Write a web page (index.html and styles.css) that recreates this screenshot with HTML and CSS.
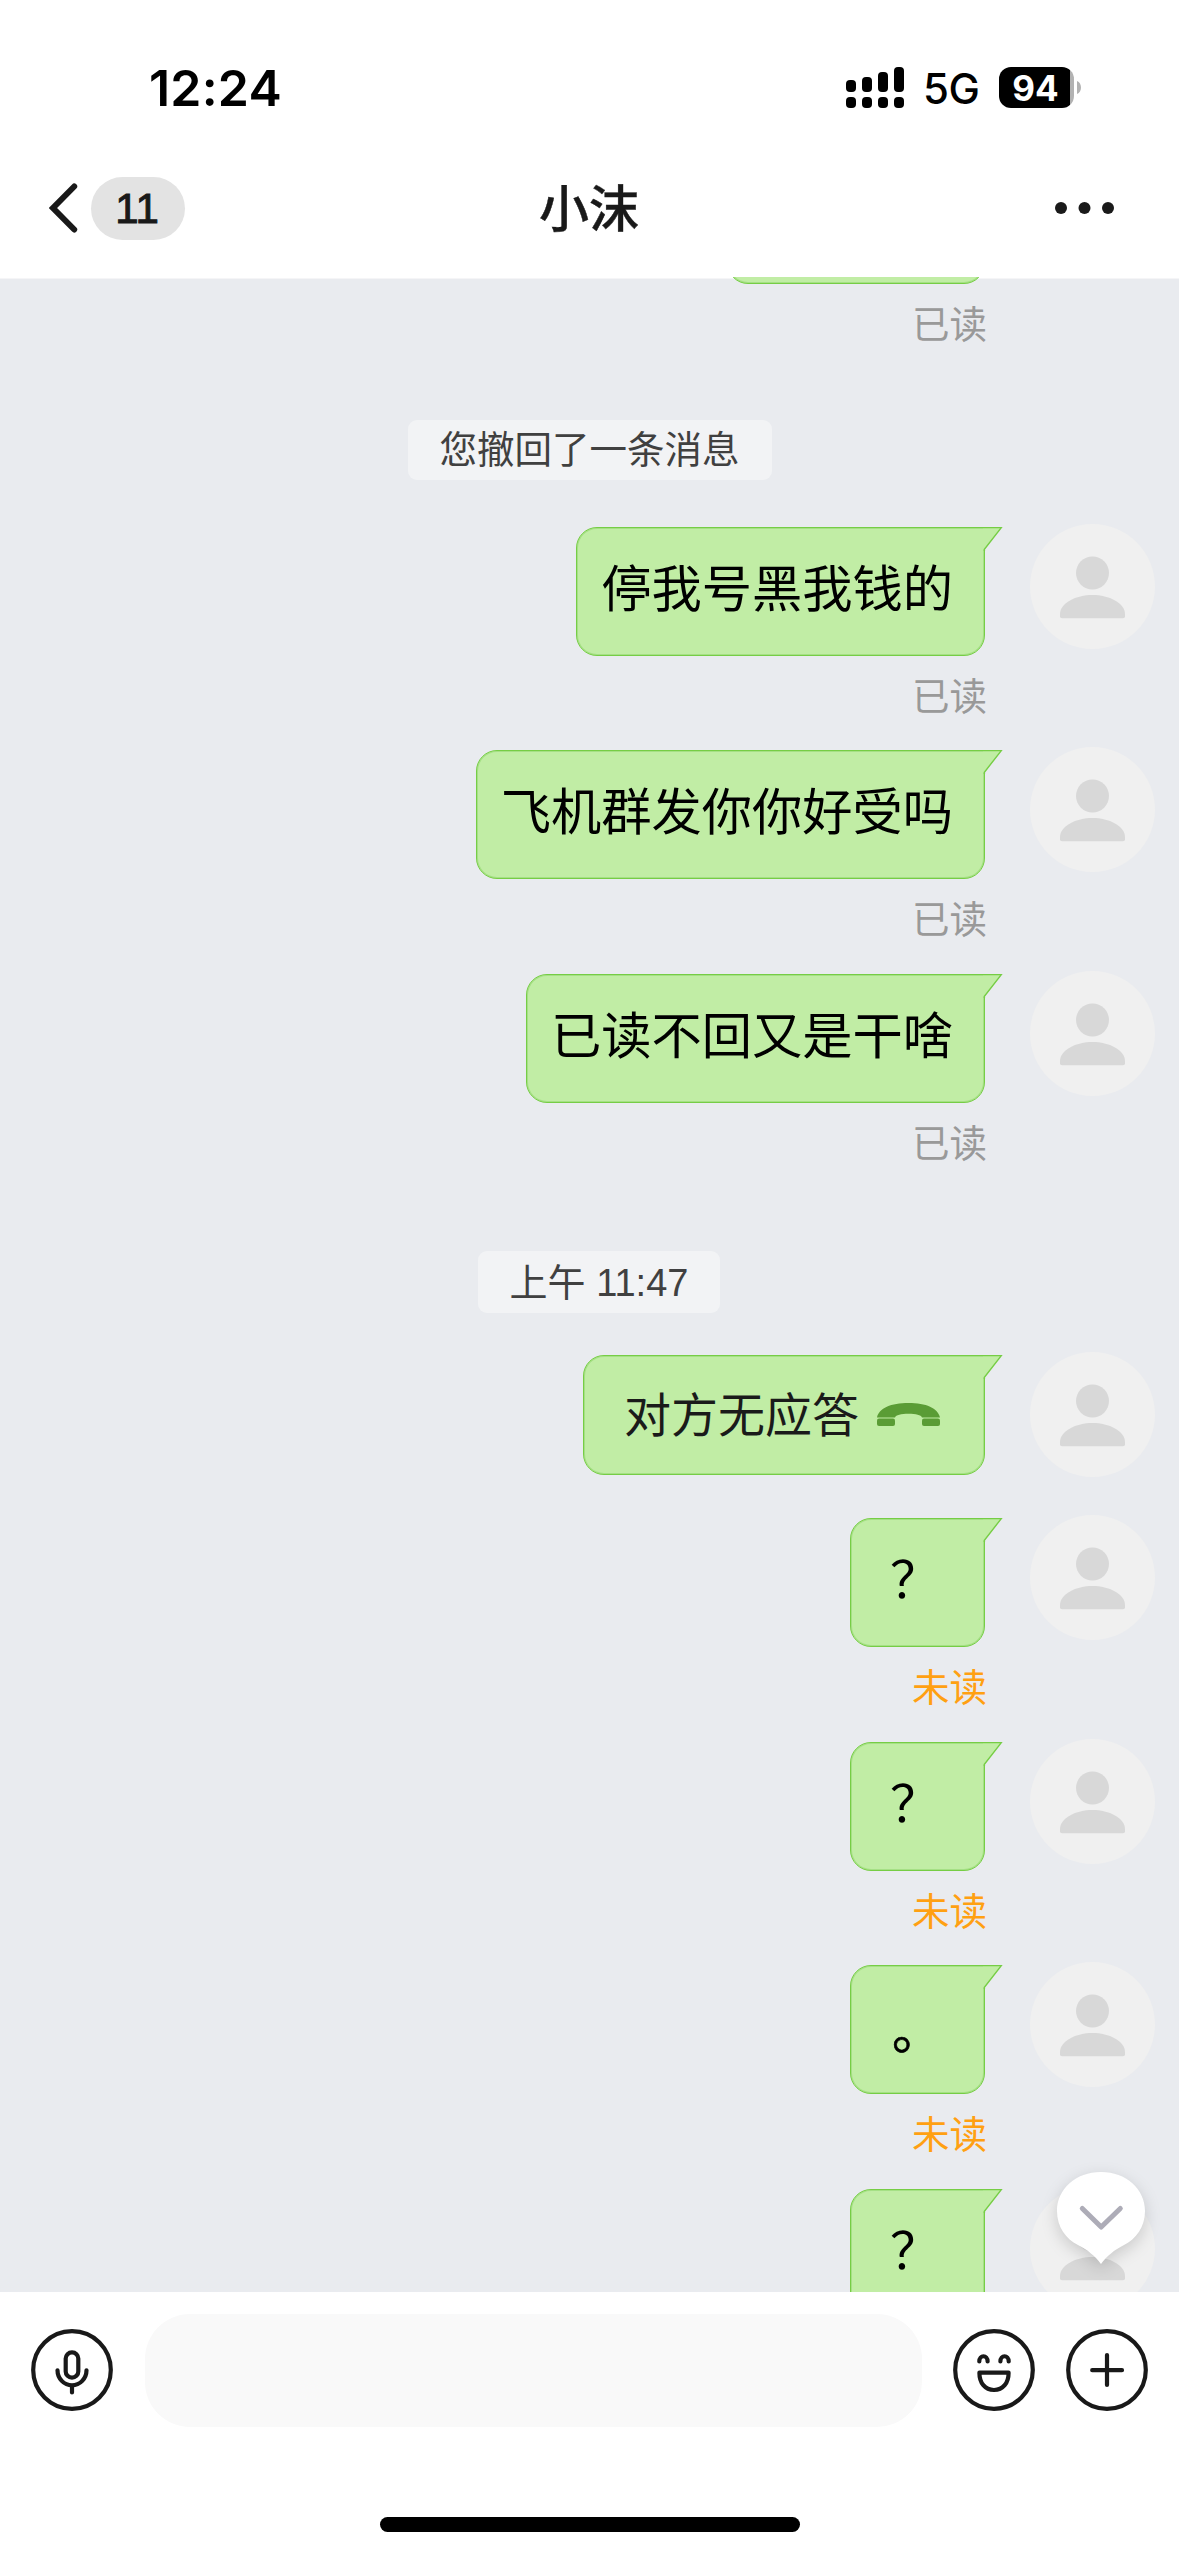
FILE: index.html
```html
<!DOCTYPE html>
<html lang="zh-CN">
<head>
<meta charset="utf-8">
<title>小沫</title>
<link rel="stylesheet" href="styles.css">
</head>
<body>
<svg class="defs" aria-hidden="true">
  <symbol id="person" viewBox="0 0 125 125">
    <circle cx="62.5" cy="49" r="16.5"/>
    <path d="M30 90C30 79 46 71 62.5 71S95 79 95 90V92.500Q95 94.300 93 94.300H32Q30 94.300 30 92.500Z"/>
  </symbol>
  <symbol id="tail" viewBox="0 0 20 24">
    <path class="tail-fill" d="M0 .5H18.500L1.500 22.500H0Z"/>
    <path class="tail-line" d="M0 .6H18.300L1.400 22.200V24"/>
  </symbol>
</svg>
<div class="screen">
  <header class="top">
    <div class="status">
      <span class="clock">12:24</span>
      <div class="status-right">
        <svg class="signal" width="58" height="41" viewBox="0 0 58 41">
          <rect x="0" y="13" width="10" height="12" rx="4"/><rect x="16" y="10" width="10" height="15" rx="4"/>
          <rect x="32" y="5" width="10" height="20" rx="4"/><rect x="48" y="0" width="10" height="25" rx="4"/>
          <rect x="0" y="30" width="10" height="11" rx="4"/><rect x="16" y="30" width="10" height="11" rx="4"/>
          <rect x="32" y="30" width="10" height="11" rx="4"/><rect x="48" y="30" width="10" height="11" rx="4"/>
        </svg>
        <span class="network">5G</span>
        <span class="battery">94</span>
        <svg class="nub" width="4" height="13" viewBox="0 0 4 13"><path d="M0 0C5.300 2 5.300 11 0 13Z"/></svg>
      </div>
    </div>
    <nav class="nav">
      <div class="back">
        <svg width="29" height="50" viewBox="0 0 29 50"><path d="M25.200 3.500L4 25L25.200 46.500"/></svg>
        <span class="count">11</span>
      </div>
      <h1 class="title">小沫</h1>
      <svg class="more" width="60" height="12" viewBox="0 0 60 12"><circle cx="6" cy="6" r="6"/><circle cx="29.500" cy="6" r="6"/><circle cx="53" cy="6" r="6"/></svg>
    </nav>
  </header>

  <main class="chat">
    <div class="list">
      <div class="row">
        <div class="stack"><div class="bubble earlier"><svg class="tail"><use href="#tail"/></svg></div><span class="state">已读</span></div>
        <svg class="avatar"><use href="#person"/></svg>
      </div>
      <div class="notice"><span class="pill">您撤回了一条消息</span></div>
      <div class="row">
        <div class="stack"><div class="bubble">停我号黑我钱的<svg class="tail"><use href="#tail"/></svg></div><span class="state">已读</span></div>
        <svg class="avatar"><use href="#person"/></svg>
      </div>
      <div class="row">
        <div class="stack"><div class="bubble">飞机群发你你好受吗<svg class="tail"><use href="#tail"/></svg></div><span class="state">已读</span></div>
        <svg class="avatar"><use href="#person"/></svg>
      </div>
      <div class="row">
        <div class="stack"><div class="bubble">已读不回又是干啥<svg class="tail"><use href="#tail"/></svg></div><span class="state">已读</span></div>
        <svg class="avatar"><use href="#person"/></svg>
      </div>
      <div class="notice time"><span class="pill">上午 11:47</span></div>
      <div class="row call-row">
        <div class="stack"><div class="bubble call"><span class="call-text">对方无应答</span>
          <svg class="phone" width="63" height="23" viewBox="0 0 63 23"><path d="M0 14.500C2 5 14 0 31.500 0S61 5 63 14.500H45C44 12 39 10.800 31.500 10.800S19 12 18 14.500Z"/><rect x="0" y="15.500" width="18" height="7.500" rx="2"/><rect x="45" y="15.500" width="18" height="7.500" rx="2"/></svg>
          <svg class="tail"><use href="#tail"/></svg></div></div>
        <svg class="avatar"><use href="#person"/></svg>
      </div>
      <div class="row">
        <div class="stack"><div class="bubble mark">？<svg class="tail"><use href="#tail"/></svg></div><span class="state unread">未读</span></div>
        <svg class="avatar"><use href="#person"/></svg>
      </div>
      <div class="row">
        <div class="stack"><div class="bubble mark">？<svg class="tail"><use href="#tail"/></svg></div><span class="state unread">未读</span></div>
        <svg class="avatar"><use href="#person"/></svg>
      </div>
      <div class="row">
        <div class="stack"><div class="bubble stop">。<svg class="tail"><use href="#tail"/></svg></div><span class="state unread">未读</span></div>
        <svg class="avatar"><use href="#person"/></svg>
      </div>
      <div class="row">
        <div class="stack"><div class="bubble mark">？<svg class="tail"><use href="#tail"/></svg></div></div>
        <svg class="avatar"><use href="#person"/></svg>
      </div>
    </div>
    <svg class="jump" width="88" height="92" viewBox="0 0 88 92">
      <path class="drop" d="M44 0C69 0 88 17 88 39C88 55 79 67 67 73C57 78 50 84 44 92C38 84 31 78 21 73C9 67 0 55 0 39C0 17 19 0 44 0Z"/>
      <path class="arrow" d="M25.300 36.500L44.200 55L63.300 36.500"/>
    </svg>
  </main>

  <footer class="bottom">
    <div class="composer">
      <svg class="tool" width="82" height="82" viewBox="0 0 82 82"><circle cx="41" cy="41" r="38.800"/><rect x="34.700" y="23.300" width="12.600" height="25.400" rx="6.300"/><path d="M26.500 41.300A14.500 15 0 0 0 55.500 41.300M41 56.500V63.500"/></svg>
      <div class="field"></div>
      <svg class="tool smile" width="82" height="82" viewBox="0 0 82 82"><circle cx="41" cy="41" r="38.800"/><path d="M26.300 32.500C26.300 25.500 34.600 25.500 34.600 32.500M47.400 32.500C47.400 25.500 55.700 25.500 55.700 32.500M26.400 43.700H55.600C55.600 54 50 61 41 61S26.400 54 26.400 43.700Z"/></svg>
      <svg class="tool plus" width="82" height="82" viewBox="0 0 82 82"><circle cx="41" cy="41" r="38.800"/><path d="M41 26V56M26.200 41.200H56"/></svg>
    </div>
    <div class="home"></div>
  </footer>
</div>
</body>
</html>
```
FILE: styles.css
```css
* { box-sizing: border-box; }
body {
  margin: 0;
  background: #fff;
  font-family: "Liberation Sans", "Noto Sans CJK SC", sans-serif;
}
svg { display: block; flex: none; }
.defs { position: absolute; width: 0; height: 0; }
.screen {
  width: 1179px;
  height: 2556px;
  display: flex;
  flex-direction: column;
  overflow: hidden;
}

/* header */
.top { height: 277px; flex: none; }
.status {
  height: 139px;
  padding: 36px 98px 0 149px;
  display: flex;
  justify-content: space-between;
  align-items: flex-start;
  font-family: Inter, sans-serif;
  color: #000;
}
.clock { font-size: 50px; line-height: 105px; font-weight: 600; letter-spacing: 0.2px; }
.status-right { display: flex; align-items: center; height: 103px; }
.network { font-size: 42px; font-weight: 500; margin-left: 19px; width: 57px; line-height: 60px; padding-top: 3px; letter-spacing: -0.5px; }
.battery {
  width: 75px;
  height: 41px;
  margin-left: 19px;
  padding-right: 2px;
  border-radius: 12px;
  background: linear-gradient(to right, #000 71px, #b2b2b2 71px);
  color: #fff;
  font-size: 35px;
  line-height: 42px;
  font-weight: 700;
  text-align: center;
}
.nub { margin-left: 3px; fill: #b2b2b2; }
.nav {
  height: 138px;
  padding: 0 64px 0 49px;
  display: grid;
  grid-template-columns: 1fr auto 1fr;
  align-items: center;
}
.back { display: flex; align-items: center; gap: 13px; }
.back path { fill: none; stroke: #191919; stroke-width: 6; stroke-linecap: round; stroke-linejoin: miter; }
.count {
  width: 94px;
  height: 63px;
  padding-right: 2px;
  border-radius: 32px;
  background: #e3e3e3;
  color: #191919;
  font-size: 42px;
  line-height: 64px;
  text-align: center;
  -webkit-text-stroke: 1px #191919;
}
.title {
  margin: 0;
  padding: 3px 0 0 14px;
  font-size: 50px;
  line-height: 70px;
  font-weight: 500;
  color: #191919;
  -webkit-text-stroke: 0.400px #191919;
}
.more { justify-self: end; fill: #1a1a1a; }

/* conversation */
.chat {
  position: relative;
  height: 2015px;
  flex: none;
  overflow: hidden;
  background: linear-gradient(#fff 1px, #f5f5f7 1px, #f5f5f7 2px, #e9ebef 2px);
}
.list { margin-top: -125px; }
.row {
  height: 223.600px;
  padding-right: 24px;
  display: flex;
  justify-content: flex-end;
  gap: 45px;
}
.call-row { height: 163.300px; }
.stack { padding-top: 3px; display: flex; flex-direction: column; align-items: flex-end; }
.bubble {
  position: relative;
  height: 129px;
  min-width: 135px;
  padding: 0 31px 0 24px;
  border: 1px solid #76cd45;
  border-radius: 21px 0 21px 21px;
  box-shadow: inset 0 0 0 1px #a5e085;
  background: #c1eda5;
  color: #000;
  font-size: 50.250px;
  line-height: 124px;
  white-space: nowrap;
}
.earlier { width: 258px; }
.tail { position: absolute; left: calc(100% - 1px); top: -1px; width: 20px; height: 24px; }
.tail-fill { fill: #c1eda5; }
.tail-line { fill: none; stroke: #76cd45; stroke-width: 1.400; }
.mark { padding: 0 0 0 39px; }
.stop { padding: 0 0 0 41px; line-height: 132px; -webkit-text-stroke: 0.600px #000; }
.call {
  height: 120px;
  width: 402px;
  padding: 0 0 0 40px;
  display: flex;
  align-items: center;
  gap: 18px;
  color: #1a1a1a;
  font-size: 47px;
}
.call-text { padding-top: 3px; }
.phone { fill: #5a9c35; }
.state { margin: 14px -2px 0 0; font-size: 37.500px; line-height: 54px; color: #999; }
.unread { color: #ffa012; }
.avatar { width: 125px; height: 125px; border-radius: 50%; background: #f0f0f0; fill: #d8d8d8; }
.notice { height: 148px; padding-top: 44px; display: flex; justify-content: center; align-items: flex-start; }
.pill {
  height: 60px;
  padding: 0 32px;
  border-radius: 9px;
  background: #f2f3f5;
  color: #404040;
  font-size: 37.500px;
  line-height: 60px;
}
.time { height: 157.400px; padding: 57px 0 0 19px; }
.time .pill { height: 62px; line-height: 64px; font-size: 38px; }
.jump { position: absolute; left: 1057px; top: 1895px; overflow: visible; filter: drop-shadow(0 5px 8px rgba(0, 0, 0, .16)); }
.drop { fill: #fff; }
.arrow { fill: none; stroke: #adacb7; stroke-width: 5; stroke-linecap: round; stroke-linejoin: round; }

/* composer */
.bottom { flex: 1; padding-top: 22px; }
.composer { height: 113px; padding: 0 31px; display: flex; align-items: center; }
.field { flex: 1; height: 113px; margin: 0 31px 0 32px; border-radius: 45px; background: #f9f9f9; }
.tool { margin-bottom: 1px; fill: none; stroke: #191919; stroke-width: 4.200; stroke-linecap: round; stroke-linejoin: round; }
.plus { margin-left: 31px; }
.home { width: 420px; height: 15px; margin: 90px auto 0; border-radius: 8px; background: #000; }
```
